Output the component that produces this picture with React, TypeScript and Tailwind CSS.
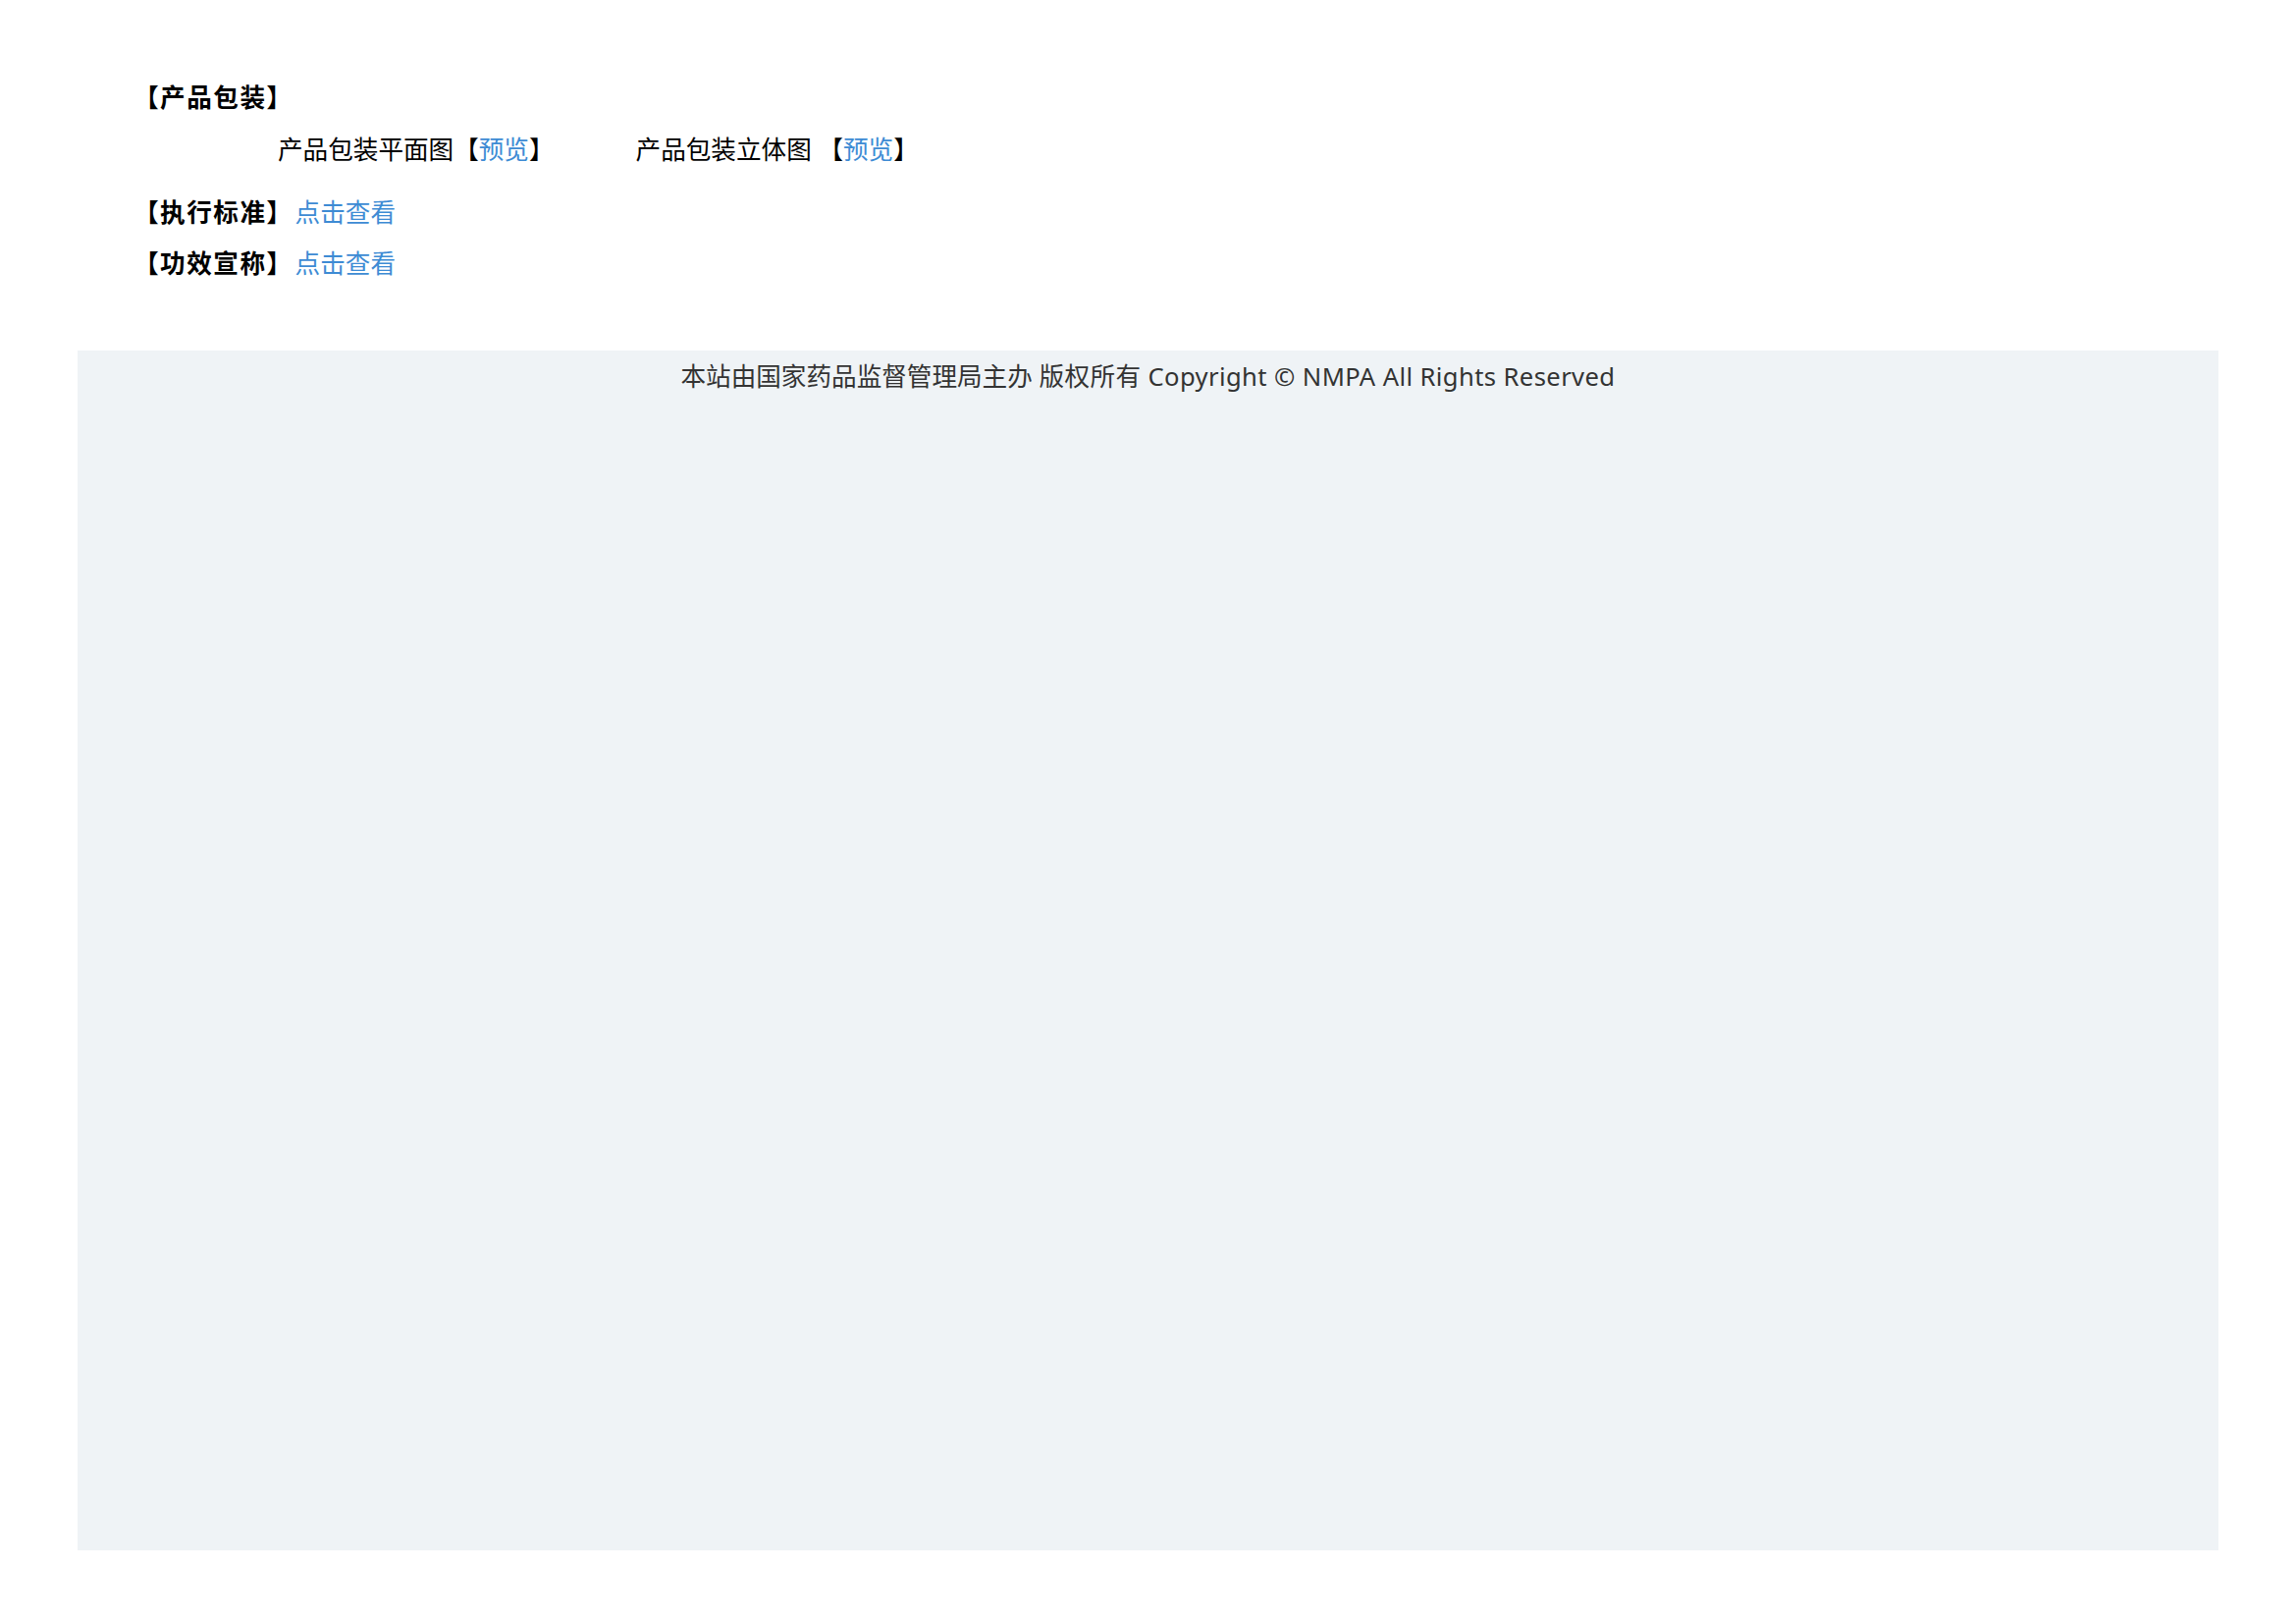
export default function App() {
  // font stack: latin first, CJK after
  const font = {
    fontFamily: '"Noto Sans", "Noto Sans CJK SC", sans-serif',
  };

  const Heading = ({ text }: { text: string }) => (
    <span className="ml-[3px] font-bold tracking-[1.5px]">【{text}】</span>
  );

  return (
    <div
      className="min-h-[1654px] w-full bg-white px-[79px] pt-[81px] text-[25.6px] leading-[38px] text-black"
      style={font}
    >
      <div className="pl-[54px]">
        <div className="h-[38px]">
          <Heading text="产品包装" />
        </div>

        <div className="mt-[15px] flex h-[38px] pl-[150px]">
          <span>
            产品包装平面图【<a className="text-[#3d8bd4]">预览</a>】
          </span>
          <span className="ml-[83px]">
            产品包装立体图 【<a className="text-[#3d8bd4]">预览</a>】
          </span>
        </div>

        <div className="mt-[26px] flex h-[38px]">
          <Heading text="执行标准" />
          <a className="ml-[2px] text-[#3d8bd4]">点击查看</a>
        </div>

        <div className="mt-[14px] flex h-[38px]">
          <Heading text="功效宣称" />
          <a className="ml-[2px] text-[#3d8bd4]">点击查看</a>
        </div>
      </div>

      <footer className="mt-[69px] h-[1222px] bg-[#eff3f6] pt-[8px] text-center text-[#333]">
        本站由国家药品监督管理局主办 <span className="tracking-[0.4px]">版权所有 Copyright © NMPA All Rights Reserved</span>
      </footer>
    </div>
  );
}
